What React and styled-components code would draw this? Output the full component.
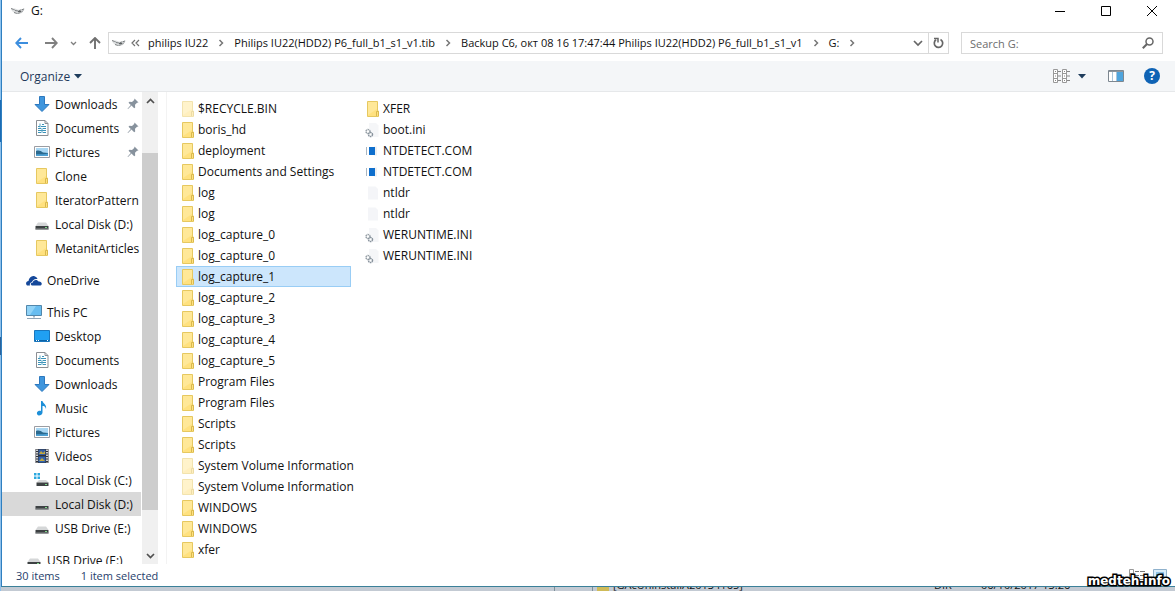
import React, { useState } from "react";
import styled, { createGlobalStyle } from "styled-components";

const quickAccess = [
  { icon: "download", label: "Downloads", pinned: true },
  { icon: "document", label: "Documents", pinned: true },
  { icon: "picture", label: "Pictures", pinned: true },
  { icon: "folder", label: "Clone" },
  { icon: "folder", label: "IteratorPattern" },
  { icon: "disk", label: "Local Disk (D:)" },
  { icon: "folder", label: "MetanitArticles" },
];

const thisPc = [
  { icon: "desktop", label: "Desktop" },
  { icon: "document", label: "Documents" },
  { icon: "download", label: "Downloads" },
  { icon: "music", label: "Music" },
  { icon: "picture", label: "Pictures" },
  { icon: "video", label: "Videos" },
  { icon: "systemDisk", label: "Local Disk (C:)" },
  { icon: "disk", label: "Local Disk (D:)", current: true },
  { icon: "disk", label: "USB Drive (E:)" },
];

const path = [
  "philips IU22",
  "Philips IU22(HDD2) P6_full_b1_s1_v1.tib",
  "Backup C6, окт 08 16 17:47:44 Philips IU22(HDD2) P6_full_b1_s1_v1",
  "G:",
];

const files = [
  { icon: "folder", name: "$RECYCLE.BIN", hidden: true },
  { icon: "folder", name: "boris_hd" },
  { icon: "folder", name: "deployment" },
  { icon: "folder", name: "Documents and Settings" },
  { icon: "folder", name: "log" },
  { icon: "folder", name: "log" },
  { icon: "folder", name: "log_capture_0" },
  { icon: "folder", name: "log_capture_0" },
  { icon: "folder", name: "log_capture_1" },
  { icon: "folder", name: "log_capture_2" },
  { icon: "folder", name: "log_capture_3" },
  { icon: "folder", name: "log_capture_4" },
  { icon: "folder", name: "log_capture_5" },
  { icon: "folder", name: "Program Files" },
  { icon: "folder", name: "Program Files" },
  { icon: "folder", name: "Scripts" },
  { icon: "folder", name: "Scripts" },
  { icon: "folder", name: "System Volume Information", hidden: true },
  { icon: "folder", name: "System Volume Information", hidden: true },
  { icon: "folder", name: "WINDOWS" },
  { icon: "folder", name: "WINDOWS" },
  { icon: "folder", name: "xfer" },
  { icon: "folder", name: "XFER" },
  { icon: "config", name: "boot.ini" },
  { icon: "program", name: "NTDETECT.COM" },
  { icon: "program", name: "NTDETECT.COM" },
  { icon: "blank", name: "ntldr" },
  { icon: "blank", name: "ntldr" },
  { icon: "config", name: "WERUNTIME.INI" },
  { icon: "config", name: "WERUNTIME.INI" },
];

const shapes = {
  folder: (
    <>
      <path d="M2.500 .5h10v9.500h1v5.500h-11z" fill="#ffe17f" stroke="#e6c860" />
      <path d="M3 1h9v7l-9 6z" fill="#ffe898" />
      <path d="M11.500 15V10.500h2V15" stroke="#d9b94f" fill="#ffe17f" />
    </>
  ),
  download: (
    <path
      d="M5.500 .5h5v8h4.500L8 15.500 1 8.500h4.500z"
      fill="#3f96dd"
      stroke="#2d78be"
    />
  ),
  document: (
    <>
      <path d="M2.500 .5h8.500l3 3v12H2.500z" fill="#fff" stroke="#8b8f94" />
      <path d="M11 .5v3h3" fill="none" stroke="#8b8f94" />
      <path
        d="M4 6.500h2M8 4.500h2M7 6.500h5M4 8.500h3M9 8.500h3M4 10.500h8M4 12.500h3M9 12.500h3"
        stroke="#3c93b8"
      />
      <path d="M6 3.500v4M8 8v5" stroke="#54a4c6" />
    </>
  ),
  picture: (
    <>
      <path d="M.5 2.500h15v11H.5z" fill="#fff" stroke="#9a9da3" />
      <path d="M2 4h12v8H2z" fill="#a9d7f3" />
      <path d="M2 7c3-1 5 0 7 1.500l5 .5v3H2z" fill="#2b6a8f" />
      <path d="M2 10.500c4-1 8 .5 12-1V12H2z" fill="#4da0d3" />
    </>
  ),
  disk: (
    <>
      <path d="M4 6.500h8l2.500 3.500h-13z" fill="#d5d7d8" />
      <path d="M1.500 10h13v3.500h-13z" fill="#3d4143" />
      <path d="M1.500 13h13" stroke="#8d9193" />
      <path d="M11 11.500h2" stroke="#7fd98a" />
    </>
  ),
  systemDisk: (
    <>
      <path
        d="M0 1h2.500v2.500H0zM3.500 1H6v2.500H3.500zM0 4.500h2.500V7H0zM3.500 4.500H6V7H3.500z"
        fill="#2ba8df"
      />
      <path d="M5 8h7l2.500 2.500h-12z" fill="#d5d7d8" />
      <path d="M2.500 10.500h12V14h-12z" fill="#3d4143" />
      <path d="M11 12.500h2" stroke="#7fd98a" />
    </>
  ),
  desktop: (
    <>
      <path d="M.5 2.500h15v11H.5z" fill="#20a0f2" stroke="#1976bd" />
      <path d="M1 12.500h14" stroke="#0a63a8" />
      <path d="M2 12.500h1M4 12.500h1M13 12.500h1" stroke="#fff" />
    </>
  ),
  music: (
    <path
      d="M7 1h1.500c.5 2.500 4.500 3.500 3.500 8-.5-2.500-2-3-3.500-3v6.500C8.500 14.500 6.500 15.500 5 15.500S2.500 14 3 12.500s2.500-2 4-1.500z"
      fill="#1d8fd8"
    />
  ),
  video: (
    <>
      <path d="M1.500 1h13v14h-13z" fill="#303338" />
      <path d="M4.500 1.500h7V7h-7z" fill="#355fa5" />
      <path d="M4.500 8.500h7v6h-7z" fill="#3163ae" />
      <path d="M5 6l2-3 2 2 2-2v3zM5 13l3-3 3 3z" fill="#c4a83f" />
      <path
        d="M3 1.500v13M13 1.500v13"
        stroke="#fff"
        strokeWidth="1.500"
        strokeDasharray="1.500 1"
      />
    </>
  ),
  cloud: (
    <>
      <path
        d="M1 13.500C-1 11.500 .5 9 2.500 9 3 5.500 6 3 9 4.500c1.500.5 2 1.500 2.500 2.500C8.500 6.500 6.500 8 6 10c-2 .5-2.500 2-2 3.500z"
        fill="#15489a"
      />
      <path
        d="M6 13.500c-2-.5-1.500-3 .8-3C7 7.500 11.500 7 12.500 9.500c3-.5 4.500 3 2 4z"
        fill="#15489a"
      />
    </>
  ),
  computer: (
    <>
      <path d="M.5 1.500h15v10H.5z" fill="#68bdf0" stroke="#5287ab" />
      <path d="M1 2h9L4 11H1z" fill="#91d3f7" />
      <path d="M7 12h2v1.500H7z" fill="#a4b6c4" />
      <path d="M1 14.500h14" stroke="#90a5b7" />
    </>
  ),
  config: (
    <>
      <path d="M4 1h7l2.500 2.500V15H4z" fill="#f5f6f8" />
      <circle cx="3" cy="9.500" r="2" fill="#fff" stroke="#98a1a8" strokeDasharray="1.500 .5" strokeWidth="1.500" />
      <circle cx="5.500" cy="12.500" r="2" fill="#fff" stroke="#87929c" strokeDasharray="1.500 .5" strokeWidth="1.500" />
    </>
  ),
  program: (
    <>
      <path d="M1.500 4v8" stroke="#a9b6c2" />
      <path d="M9 3.500h3v9H9z" fill="#eef0f2" />
      <path d="M4 4h6v8H4z" fill="#0f6fcd" />
    </>
  ),
  blank: <path d="M3 1.500h7.500L13 4v10.500H3z" fill="#f4f5f8" />,
  drive: (
    <>
      <path d="M1 5.500h4l3 1.200 7-1.200-3 4.500-4 1-4-1.500-2-1.500z" fill="#dcdedf" />
      <path
        d="M1 5.500l4 1.500M5 7.500l3 .5 6-2M4 9.500l3 1 4-1 2-2"
        fill="none"
        stroke="#7c8082"
        strokeDasharray="3 .6"
      />
      <path d="M8 8.500h3" stroke="#5d6163" />
    </>
  ),
};

const Glyph = ({ name, faded }) => (
  <GlyphSvg viewBox="0 0 16 16" $faded={faded} aria-hidden="true">
    {shapes[name]}
  </GlyphSvg>
);

const Chevron = () => (
  <svg width="6" height="8" viewBox="0 0 6 8" aria-hidden="true">
    <path d="M1.500 1l3 3-3 3" fill="none" stroke="#777" strokeWidth="1.500" />
  </svg>
);

const NavItem = ({ icon, label, pinned, current, root }) => (
  <li>
    <NavLink href="#" $root={root} $current={current}>
      <Glyph name={icon} />
      <NavLabel>{label}</NavLabel>
      {pinned && (
        <svg width="12" height="12" viewBox="0 0 12 12" aria-hidden="true">
          <path
            d="M7.500 .5l4 4-1.500.3-2 2 .2 2.700-1 .8L4.500 7.600 1 11 .5 10.800 3.800 7 1.500 4.800l1-1L5 4l2.200-2z"
            fill="#87929d"
          />
        </svg>
      )}
    </NavLink>
  </li>
);

const App = () => {
  const [selected, setSelected] = useState(8);
  return (
    <Desktop>
      <GlobalStyle />
      <ExplorerWindow>
        <TitleBar>
          <Glyph name="drive" />
          <Title>G:</Title>
          <CaptionButton aria-label="Minimize">
            <svg width="10" height="10" viewBox="0 0 10 10">
              <path d="M0 5.500h10" stroke="#000" />
            </svg>
          </CaptionButton>
          <CaptionButton aria-label="Maximize">
            <svg width="10" height="10" viewBox="0 0 10 10">
              <path d="M.5 .5h9v9h-9z" fill="none" stroke="#000" />
            </svg>
          </CaptionButton>
          <CaptionButton aria-label="Close">
            <svg width="10" height="10" viewBox="0 0 10 10">
              <path d="M0 0l10 10M10 0L0 10" stroke="#000" />
            </svg>
          </CaptionButton>
        </TitleBar>

        <AddressRow>
          <HistoryButtons>
            <IconButton aria-label="Back" $after={17}>
              <svg width="13" height="12" viewBox="0 0 13 12">
                <path d="M13 6H1.500M6 1L1.200 6 6 11" fill="none" stroke="#3c8ede" strokeWidth="1.900" />
              </svg>
            </IconButton>
            <IconButton aria-label="Forward" $after={12}>
              <svg width="13" height="12" viewBox="0 0 13 12">
                <path d="M0 6h11.500M7 1l4.800 5L7 11" fill="none" stroke="#808080" strokeWidth="1.900" />
              </svg>
            </IconButton>
            <IconButton aria-label="Recent locations" $after={12}>
              <svg width="7" height="5" viewBox="0 0 7 5">
                <path d="M1 1l2.500 2.500L6 1" fill="none" stroke="#808080" strokeWidth="1.300" />
              </svg>
            </IconButton>
            <IconButton aria-label="Up">
              <svg width="12" height="12" viewBox="0 0 12 12">
                <path d="M6 12V1.500M1 6l5-5 5 5" fill="none" stroke="#707070" strokeWidth="1.900" />
              </svg>
            </IconButton>
          </HistoryButtons>
          <AddressBar>
            <Glyph name="drive" />
            <Overflow aria-label="More locations">
              <svg width="9" height="8" viewBox="0 0 9 8">
                <path d="M4 1L1 4l3 3M8 1L5 4l3 3" fill="none" stroke="#707070" strokeWidth="1.200" />
              </svg>
            </Overflow>
            <Crumbs>
              {path.map((part) => (
                <Crumb key={part}>
                  <CrumbLink href="#">{part}</CrumbLink>
                  <Chevron />
                </Crumb>
              ))}
            </Crumbs>
            <AddressButton aria-label="Previous locations">
              <svg width="10" height="7" viewBox="0 0 10 7">
                <path d="M1 1l4 4 4-4" fill="none" stroke="#666" strokeWidth="1.700" />
              </svg>
            </AddressButton>
            <AddressButton aria-label="Refresh" $divided>
              <svg width="11" height="12" viewBox="0 0 11 12">
                <path d="M7.500 2.500A4.200 4.200 0 1 1 3 2.800" fill="none" stroke="#666" strokeWidth="1.700" />
                <path d="M1 1.500h4v4" fill="none" stroke="#666" strokeWidth="1.500" />
              </svg>
            </AddressButton>
          </AddressBar>
          <SearchBox>
            <SearchInput type="text" placeholder="Search G:" aria-label="Search G:" />
            <svg width="12" height="12" viewBox="0 0 12 12" aria-hidden="true">
              <circle cx="7.500" cy="4.500" r="3.500" fill="none" stroke="#666" strokeWidth="1.500" />
              <path d="M5 7L.8 11.200" stroke="#666" strokeWidth="2" />
            </svg>
          </SearchBox>
        </AddressRow>

        <Toolbar>
          <OrganizeButton>
            Organize
            <svg width="8" height="5" viewBox="0 0 8 5">
              <path d="M0 0h8L4 4.500z" fill="#1e3c5c" />
            </svg>
          </OrganizeButton>
          <IconButton aria-label="Change your view" $after={8}>
            <svg width="17" height="14" viewBox="0 0 17 14">
              <path
                d="M.5 .5h4v13h-4zM9.500 .5h4v13h-4zM.5 4.500h4M.5 9.500h4M9.500 4.500h4M9.500 9.500h4"
                fill="#fff"
                stroke="#999"
              />
              <path
                d="M2 2.500h1M2 7h1M2 11.500h1M11 2.500h1M11 7h1M11 11.500h1M5 2.500h3M5 7h3M5 11.500h3M14 2.500h3M14 7h3M14 11.500h3"
                stroke="#888"
              />
            </svg>
          </IconButton>
          <IconButton aria-label="More view options" $after={22}>
            <svg width="8" height="5" viewBox="0 0 8 5">
              <path d="M0 0h8L4 4.500z" fill="#1e3c5c" />
            </svg>
          </IconButton>
          <IconButton aria-label="Show the preview pane" $after={20}>
            <svg width="16" height="12" viewBox="0 0 16 12">
              <path d="M.5 .5h15v11H.5z" fill="#fff" stroke="#7d8790" />
              <path d="M1 1.500h14" stroke="#8d969e" />
              <path d="M9 2h6v9H9z" fill="#4ea4dd" />
              <path d="M4.500 2v9M8.500 2v9" stroke="#a9c5da" />
            </svg>
          </IconButton>
          <HelpButton aria-label="Help">?</HelpButton>
        </Toolbar>

        <Content>
          <NavPane aria-label="Navigation pane">
            <NavTree>
              <NavGroup>
                {quickAccess.map((item) => (
                  <NavItem key={item.label} {...item} />
                ))}
              </NavGroup>
              <NavGroup>
                <NavItem icon="cloud" label="OneDrive" root />
              </NavGroup>
              <NavGroup>
                <NavItem icon="computer" label="This PC" root />
                {thisPc.map((item) => (
                  <NavItem key={item.label} {...item} />
                ))}
              </NavGroup>
              <NavGroup>
                <NavItem icon="disk" label="USB Drive (E:)" root />
              </NavGroup>
            </NavTree>
            <ScrollBar>
              <ScrollButton aria-label="Scroll up">
                <svg width="9" height="6" viewBox="0 0 9 6">
                  <path d="M1 5l3.500-3.500L8 5" fill="none" stroke="#505050" strokeWidth="1.700" />
                </svg>
              </ScrollButton>
              <ScrollTrack>
                <ScrollThumb />
              </ScrollTrack>
              <ScrollButton aria-label="Scroll down">
                <svg width="9" height="6" viewBox="0 0 9 6">
                  <path d="M1 1l3.500 3.500L8 1" fill="none" stroke="#505050" strokeWidth="1.700" />
                </svg>
              </ScrollButton>
            </ScrollBar>
          </NavPane>
          <FileList>
            {files.map((file, index) => (
              <li key={index}>
                <FileButton
                  $selected={index === selected}
                  onClick={() => setSelected(index)}
                >
                  <Glyph name={file.icon} faded={file.hidden} />
                  {file.name}
                </FileButton>
              </li>
            ))}
          </FileList>
        </Content>

        <StatusBar>
          <span>{files.length} items</span>
          <StatusSelection>1 item selected</StatusSelection>
          <ViewButton aria-label="Details view">
            <svg width="16" height="12" viewBox="0 0 16 12">
              <path d="M.5 .5h4v11h-4zM.5 4.500h4M.5 8.500h4" fill="#fff" stroke="#999" />
              <path d="M6 2.500h4M11 2.500h5M6 6.500h4M11 6.500h5M6 10.500h4M11 10.500h5" stroke="#777" />
            </svg>
          </ViewButton>
          <ViewButton aria-label="Large icons view">
            <svg width="14" height="12" viewBox="0 0 14 12">
              <path d="M.5 .5h13v11H.5z" fill="#d9ecfa" stroke="#8fb1cc" />
              <path d="M3 3h8v6H3z" fill="#4f8db9" />
              <path d="M3 3h8v2H3z" fill="#8bc2e8" />
            </svg>
          </ViewButton>
        </StatusBar>
        <Watermark>medteh.info</Watermark>
      </ExplorerWindow>

      <WindowBehind>
        <BehindTree />
        <BehindGap />
        <BehindRow>
          <BehindFolder />
          <BehindName>[GAcUninstallA20134165]</BehindName>
          <BehindType>DIR</BehindType>
          <span>06/10/2017 13:26</span>
        </BehindRow>
      </WindowBehind>
    </Desktop>
  );
};

export default App;

const GlobalStyle = createGlobalStyle`
  body {
    margin: 0;
    font-family: "Open Sans", "Noto Sans", sans-serif;
    font-size: 12px;
    color: #111;
  }

  * {
    box-sizing: border-box;
  }

  ul, ol {
    list-style: none;
    margin: 0;
    padding: 0;
  }

  button, input {
    font: inherit;
    color: inherit;
    border: none;
    background: none;
    padding: 0;
  }

  a {
    color: inherit;
    text-decoration: none;
  }

  svg {
    display: block;
    flex: none;
  }
`;

const Desktop = styled.div`
  display: flex;
  flex-direction: column;
  height: 100vh;
  overflow: hidden;
  padding-left: 1px;
  background: linear-gradient(#8fc3ee 0 17%, #1c6cb4 17% 24%, #8fc0ea 24% 57%, #2c639b 57% 60%, #8fc0ea 60%);
`;

const ExplorerWindow = styled.div`
  position: relative;
  display: flex;
  flex-direction: column;
  flex: 1;
  min-height: 0;
  background: #fff;
  border-left: 1px solid #2f7fc0;
  border-bottom: 1px solid #3b8099;
`;

const GlyphSvg = styled.svg`
  width: 16px;
  height: 16px;
  opacity: ${(props) => (props.$faded ? 0.5 : 1)};
`;

const TitleBar = styled.div`
  display: flex;
  align-items: center;
  height: 21px;
  padding-left: 8px;
`;

const Title = styled.h1`
  flex: 1;
  margin: 0 0 0 5px;
  font-size: 12px;
  font-weight: 400;
`;

const CaptionButton = styled.button`
  display: flex;
  align-items: center;
  justify-content: center;
  width: 46px;
  height: 20px;
`;

const AddressRow = styled.div`
  display: flex;
  align-items: center;
  height: 40px;
  padding: 4px 12px 0 13px;
`;

const HistoryButtons = styled.div`
  display: flex;
  align-items: center;
  flex: none;
  width: 93px;
`;

const IconButton = styled.button`
  display: flex;
  margin-right: ${(props) => props.$after || 0}px;
`;

const AddressBar = styled.div`
  display: flex;
  align-items: center;
  flex: 1;
  min-width: 0;
  height: 22px;
  padding-left: 2px;
  margin-right: 12px;
  border: 1px solid #d9d9d9;
`;

const Overflow = styled.button`
  margin: 0 8px 0 4px;
`;

const Crumbs = styled.ol`
  display: flex;
  flex: 1;
  min-width: 0;
  overflow: hidden;
  font-size: 11px;
`;

const Crumb = styled.li`
  display: flex;
  align-items: center;
  gap: 10px;
  padding-right: 10px;
  white-space: nowrap;
`;

const CrumbLink = styled.a`
  line-height: 20px;
`;

const AddressButton = styled.button`
  display: flex;
  align-items: center;
  justify-content: center;
  width: 20px;
  height: 20px;
  border-left: ${(props) => (props.$divided ? "1px solid #d9d9d9" : "none")};
`;

const SearchBox = styled.div`
  display: flex;
  align-items: center;
  flex: none;
  width: 202px;
  height: 22px;
  padding: 0 8px;
  border: 1px solid #d9d9d9;
`;

const SearchInput = styled.input`
  flex: 1;
  min-width: 0;
  outline: 0;
  font-size: 11px;

  &::placeholder {
    color: #6d6d6d;
  }
`;

const Toolbar = styled.div`
  display: flex;
  align-items: center;
  height: 31px;
  padding: 0 15px 0 18px;
  background: #f4f6f8;
  border-bottom: 1px solid #e6e8ea;
  color: #1e395b;
`;

const OrganizeButton = styled.button`
  display: flex;
  align-items: center;
  gap: 4px;
  margin-right: auto;
`;

const HelpButton = styled.button`
  width: 16px;
  height: 16px;
  border-radius: 50%;
  background: #0f63b5;
  color: #fff;
  font-weight: 700;
  line-height: 16px;
`;

const Content = styled.div`
  display: flex;
  flex: 1;
  min-height: 0;
`;

const NavPane = styled.nav`
  display: flex;
  width: 165px;
  padding-right: 8px;
  border-right: 1px solid #f3f3f3;
`;

const NavTree = styled.div`
  flex: 1;
  overflow: hidden;
`;

const NavGroup = styled.ul`
  margin-bottom: 8px;
`;

const NavLink = styled.a`
  display: flex;
  align-items: center;
  gap: 5px;
  height: 24px;
  margin-right: 1px;
  padding-left: ${(props) => (props.$root ? "24px" : "32px")};
  padding-right: 2px;
  background: ${(props) => (props.$current ? "#d9d9d9" : "none")};
`;

const NavLabel = styled.span`
  flex: 1;
  white-space: nowrap;
`;

const ScrollBar = styled.div`
  display: flex;
  flex-direction: column;
  width: 16px;
  background: #f0f0f0;
`;

const ScrollButton = styled.button`
  display: flex;
  align-items: center;
  justify-content: center;
  height: 17px;
`;

const ScrollTrack = styled.div`
  display: flex;
  flex-direction: column;
  justify-content: flex-end;
  flex: 1;
  padding-bottom: 37px;
`;

const ScrollThumb = styled.div`
  height: 89%;
  background: #cdcdcd;
`;

const FileList = styled.ul`
  display: flex;
  flex-flow: column wrap;
  align-content: flex-start;
  column-gap: 10px;
  flex: 1;
  min-width: 0;
  padding: 6px 0 2px 9px;
`;

const FileButton = styled.button`
  display: flex;
  align-items: center;
  gap: 2px;
  width: 175px;
  height: 21px;
  padding-left: 3px;
  white-space: nowrap;
  border: 1px solid ${(props) => (props.$selected ? "#99cdf5" : "transparent")};
  background: ${(props) => (props.$selected ? "#cce6fc" : "none")};
`;

const StatusBar = styled.div`
  display: flex;
  align-items: center;
  height: 22px;
  padding: 0 8px 0 14px;
  font-size: 11px;
  color: #26406b;
`;

const StatusSelection = styled.span`
  flex: 1;
  margin-left: 21px;
`;

const ViewButton = styled.button`
  margin-left: 8px;
`;

const Watermark = styled.div`
  position: absolute;
  right: 5px;
  bottom: -2px;
  font: 700 12px/14px "DejaVu Sans", sans-serif;
  color: #fff;
  -webkit-text-stroke: 3px #000;
  paint-order: stroke fill;
`;

const WindowBehind = styled.div`
  display: flex;
  height: 4px;
  overflow: hidden;
  background: #c3cad3;
`;

const BehindTree = styled.div`
  width: 554px;
  border-right: 1px solid #7e9099;
`;

const BehindGap = styled.div`
  width: 38px;
  border-right: 1px solid #7e9099;
`;

const BehindRow = styled.div`
  display: flex;
  align-items: flex-end;
  gap: 4px;
  padding-left: 4px;
  font-size: 11px;
  line-height: 12px;
`;

const BehindFolder = styled.div`
  width: 12px;
  height: 4px;
  background: #cfbb58;
`;

const BehindName = styled.span`
  width: 317px;
`;

const BehindType = styled.span`
  width: 43px;
`;
